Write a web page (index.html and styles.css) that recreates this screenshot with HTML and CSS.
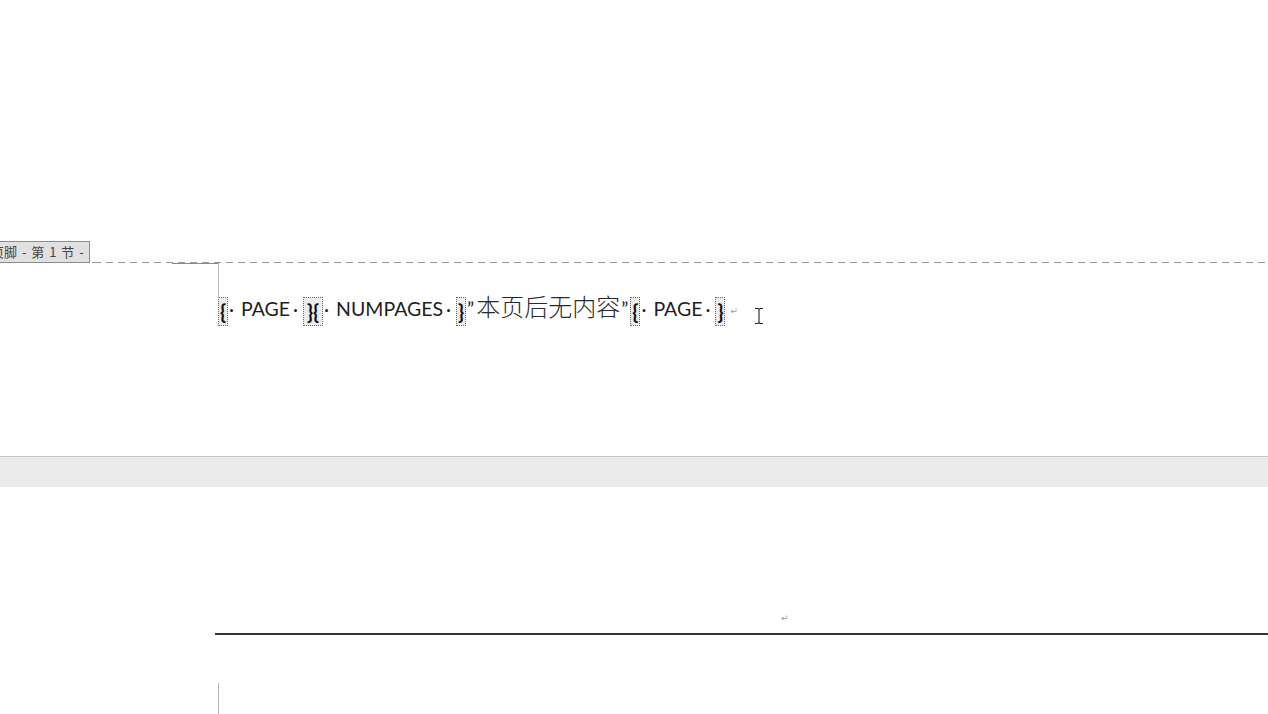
FILE: index.html
```html
<!DOCTYPE html>
<html lang="zh">
<head>
<meta charset="utf-8">
<title>页脚</title>
<link rel="stylesheet" href="styles.css">
</head>
<body>
<div class="viewport">
  <section class="page page-one">
    <div class="page-top"></div>
    <div class="footer-bar">
      <span class="footer-label">页脚 - 第 1 节 -</span>
      <span class="dash-line"></span>
    </div>
    <div class="footer-body">
      <span class="corner-mark"></span>
      <p class="footer-line"><span class="field">{</span><span class="sp lead">·</span>PAGE<span class="sp trail">·</span><span class="field wide">}{</span><span class="sp lead">·</span>NUMPAGES<span class="sp trail">·</span><span class="field">}</span><span class="q">”</span><span class="cjk">本页后无内容</span><span class="q">”</span><span class="field">{</span><span class="sp lead">·</span>PAGE<span class="sp trail">·</span><span class="field">}</span><span class="pmark">↵</span><svg class="ibeam" width="10" height="18" viewBox="0 0 10 18"><path d="M1 1.5h2.5q1.5 0 1.5 1.5v12q0 1.5 -1.5 1.5H1M9 1.5H6.5Q5 1.5 5 3v12q0 1.5 1.5 1.5H9" fill="none" stroke="#222" stroke-width="1.1"/></svg></p>
    </div>
  </section>
  <div class="page-gap"></div>
  <section class="page page-two">
    <div class="header-body">
      <p class="header-line"><span class="pmark">↵</span></p>
    </div>
    <div class="body-start">
      <span class="margin-mark"></span>
    </div>
  </section>
</div>
</body>
</html>
```
FILE: styles.css
```css
html, body {
  margin: 0;
  padding: 0;
  background: #ffffff;
}
.viewport {
  width: 1268px;
  height: 714px;
  overflow: hidden;
  font-family: "Lato", "Noto Sans CJK SC", sans-serif;
  color: #1e1e1e;
}
.page {
  background: #ffffff;
}
.page-top {
  height: 241px;
}
.footer-bar {
  display: flex;
  align-items: flex-end;
  height: 22px;
}
.footer-label {
  display: block;
  margin-left: -12px;
  height: 20px;
  line-height: 20px;
  padding: 0 5px 0 2px;
  background: #e1e1e1;
  border: 1px solid #8c8c8c;
  font-family: "Noto Sans CJK SC", sans-serif;
  font-size: 13px;
  word-spacing: 2px;
  color: #444444;
  white-space: nowrap;
}
.dash-line {
  flex: 1;
  height: 1px;
  background: repeating-linear-gradient(90deg, #9a9a9a 0 7px, transparent 7px 12px);
  background-position: 4px 0;
}
.footer-body {
  position: relative;
  height: 193px;
}
.corner-mark {
  position: absolute;
  left: 172px;
  top: 0;
  width: 46px;
  height: 34px;
  border-top: 1px solid #8a8a8a;
  border-right: 1px solid #b8b8b8;
}
.footer-line {
  margin: 0;
  padding: 27px 0 0 218px;
  height: 32px;
  line-height: 32px;
  font-size: 19.5px;
  white-space: nowrap;
}
.field {
  display: inline-block;
  vertical-align: middle;
  height: 27px;
  line-height: 27px;
  width: 8px;
  text-align: center;
  border: 1px dotted #6a6a6a;
  background: #ececec;
  font-weight: 700;
  font-size: 20px;
  color: #111;
}
.field.wide {
  width: 18px;
}
.sp {
  display: inline-block;
}
.sp.lead {
  width: 13px;
  text-indent: 1px;
}
.sp.trail {
  width: 13px;
  text-indent: 3px;
}
.q {
  display: inline-block;
  margin-left: 1px;
  margin-right: 2px;
}
.cjk {
  font-family: "Noto Sans CJK SC", sans-serif;
  font-weight: 300;
  font-size: 24px;
  color: #2a2a2a;
}
.pmark {
  display: inline-block;
  font-family: "DejaVu Sans", sans-serif;
  font-size: 9px;
  color: #9a9a9a;
  margin-left: 5px;
  line-height: 10px;
  vertical-align: middle;
}
.ibeam {
  display: inline-block;
  vertical-align: middle;
  margin-left: 16px;
  margin-top: 10px;
}
.page-gap {
  height: 30px;
  background: #ebebeb;
  border-top: 1px solid #c6c6c6;
}
.header-body {
  height: 148px;
  padding-left: 215px;
}
.header-line {
  margin: 0;
  height: 148px;
  box-sizing: border-box;
  border-bottom: 2px solid #333333;
  padding-left: 566px;
  padding-top: 126px;
}
.header-line .pmark {
  margin: 0;
  vertical-align: top;
}
.body-start {
  position: relative;
  height: 100px;
}
.margin-mark {
  position: absolute;
  left: 218px;
  top: 48px;
  width: 1px;
  height: 60px;
  background: #b5b5b5;
}
```
